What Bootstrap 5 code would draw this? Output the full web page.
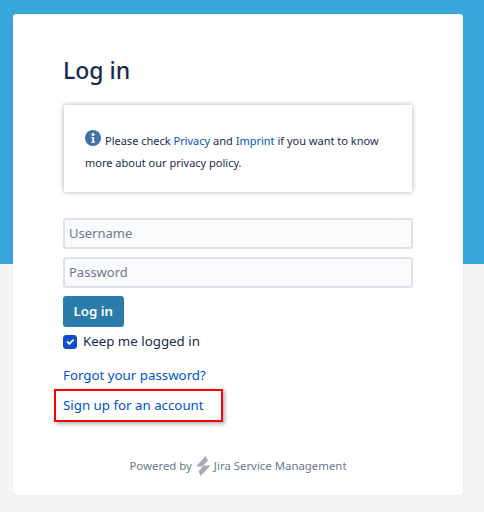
<!DOCTYPE html>
<html lang="en">
  <head>
    <meta charset="UTF-8" />
    <meta name="viewport" content="width=device-width, initial-scale=1.0" />
    <title>Log in</title>
    <link
      rel="stylesheet"
      href="https://cdn.jsdelivr.net/npm/bootstrap@5.3.2/dist/css/bootstrap.min.css"
    />
    <style>
      body {
        height: 512px;
        overflow: hidden;
        padding: 14px 21px 0 13px;
        font-family: "Noto Sans", "Open Sans", sans-serif;
        font-size: 13.3px;
        color: #172b4d;
        background: linear-gradient(#3aa7dc 0, #3aa7dc 264px, #f4f5f7 264px);
      }
      a {
        color: #0052cc;
        text-decoration: none;
      }
      .login-panel {
        height: 481px;
        padding: 38px 50px 0;
        background: #fff;
        border-radius: 3px;
        box-shadow: 0 0 1px rgba(9, 30, 66, 0.3);
      }
      .login-title {
        margin: 0 0 17px;
        font-size: 23px;
        line-height: 36px;
        font-weight: 500;
      }
      .notice-box {
        height: 87px;
        margin: 0 1px 26px;
        padding: 25px 21px 0;
        font-size: 11px;
        line-height: 22px;
        box-shadow: 0 0 5px rgba(9, 30, 66, 0.35);
      }
      .notice-icon {
        float: left;
        margin: 0 4px 0 0;
      }
      .login-input.form-control {
        height: 31px;
        margin-bottom: 8px;
        padding: 0 4px 2px;
        font-size: 13px;
        color: #172b4d;
        background: #fafbfc;
        border: 2px solid #dfe1e6;
        border-radius: 3px;
      }
      .login-input.form-control::placeholder {
        color: #6b778c;
      }
      .login-btn.btn {
        display: block;
        height: 31px;
        padding: 0 10.5px;
        font-size: 13.3px;
        font-weight: 600;
        color: #fff;
        background: #2a7dab;
        border: 0;
        border-radius: 3px;
      }
      .keep-row {
        height: 20px;
        margin: 5px 0 8px;
        gap: 6px;
      }
      .keep-row .form-check-input {
        width: 14px;
        height: 14px;
        margin: 0;
        background-color: #0b50c8;
        border-color: #0b50c8;
        border-radius: 3px;
      }
      .help-link {
        height: 30px;
        line-height: 30px;
      }
      .signup-row {
        position: relative;
      }
      .signup-mark {
        position: absolute;
        left: -9px;
        top: -1px;
        width: 169px;
        height: 33px;
        border: 2px solid #f00;
        box-shadow: 2px 2px 4px rgba(9, 30, 66, 0.35);
      }
      .powered-row {
        margin-top: 36px;
        gap: 3px;
        font-size: 11.4px;
        color: #6b778c;
      }
    </style>
  </head>
  <body>
    <main class="login-panel">
      <h1 class="login-title">Log in</h1>
      <div class="notice-box bg-white">
        <svg class="notice-icon" width="16" height="16" viewBox="0 0 16 16">
          <circle cx="8" cy="8" r="8" fill="#3f72ab" />
          <circle cx="8" cy="4.4" r="1.5" fill="#fff" />
          <path d="M6.4 7h2.7v4.6h1v1.2H6.2v-1.2h1.1V8.2h-.9z" fill="#fff" />
        </svg>
        Please check <a href="#">Privacy</a> and <a href="#">Imprint</a> if you want to know more about our privacy policy.
      </div>
      <form>
        <input class="form-control login-input" type="text" placeholder="Username" />
        <input class="form-control login-input" type="password" placeholder="Password" />
        <button class="btn login-btn" type="button">Log in</button>
        <div class="keep-row d-flex align-items-center">
          <input class="form-check-input" type="checkbox" id="keep" checked />
          <label for="keep">Keep me logged in</label>
        </div>
      </form>
      <div class="help-link"><a href="#">Forgot your password?</a></div>
      <div class="help-link signup-row">
        <a href="#">Sign up for an account</a>
        <span class="signup-mark"></span>
      </div>
      <div class="powered-row d-flex justify-content-center align-items-center">
        <span>Powered by</span>
        <svg width="16" height="20" viewBox="0 0 16 20">
          <path d="M10.5 0 1 10.5h6.5L13 4.5z M9 9.5h6.5L5.5 20l-2-5z" fill="#a5adba" />
        </svg>
        <span>Jira Service Management</span>
      </div>
    </main>
    <script src="https://cdn.jsdelivr.net/npm/bootstrap@5.3.2/dist/js/bootstrap.bundle.min.js"></script>
  </body>
</html>
